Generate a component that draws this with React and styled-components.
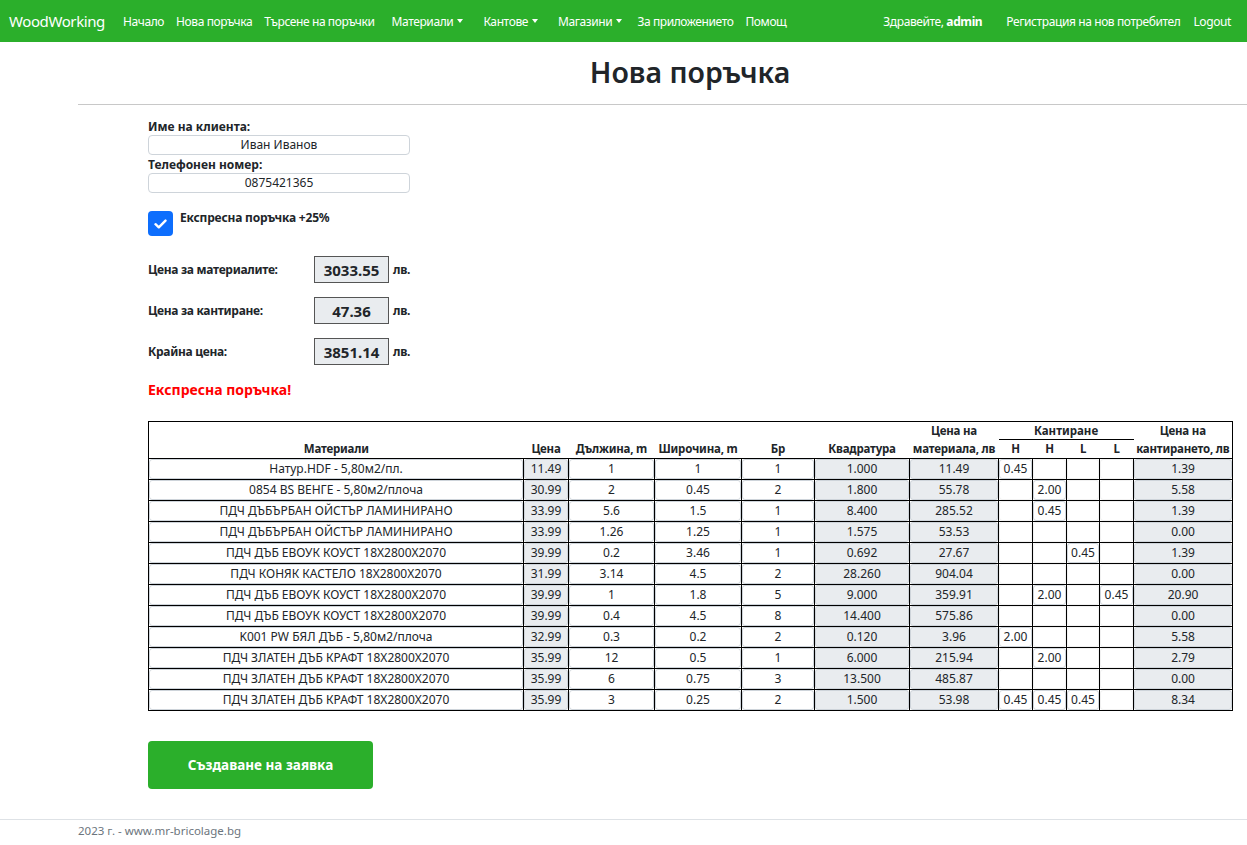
import React from "react";
import styled, {createGlobalStyle} from "styled-components";

const GlobalStyle = createGlobalStyle`
  body {
    margin: 0;
    font-family: "Noto Sans", "Open Sans", sans-serif;
    color: #212529;
    background: #fff;
    overflow-x: hidden;
  }
`;

const GREEN = "#2baf2b";

const NavBar = styled.nav`
  height: 42px;
  background: ${GREEN};
  display: flex;
  align-items: center;
  padding: 0 16px 0 9px;
  color: #fff;
  font-size: 12px;
  letter-spacing: -0.4px;
  white-space: nowrap;
`;

const Brand = styled.div`
  font-size: 15px;
  letter-spacing: -0.4px;
  margin-right: 18px;
`;

const NavLinks = styled.div`
  display: flex;
  align-items: center;
  gap: 12px;
  flex: 1;
`;

const NavLink = styled.span`
  margin-right: ${p => (p.$dropdown ? "3px" : "0")};
  margin-left: ${p => (p.$dropdown ? "5px" : "0")};
  &::after {
    content: ${p => (p.$dropdown ? "''" : "none")};
    display: inline-block;
    margin-left: 4px;
    vertical-align: 3px;
    border-top: 4px solid #fff;
    border-left: 3px solid transparent;
    border-right: 3px solid transparent;
  }
`;

const UserArea = styled.div`
  display: flex;
  align-items: center;
  gap: 13px;
`;

const Greeting = styled.span`
  margin-right: 11px;
`;

const Main = styled.main`
  margin-left: 78px;
  width: 1224px;
`;

const Title = styled.h1`
  margin: 12px 0 0;
  text-align: center;
  font-size: 28.5px;
  font-weight: 600;
  line-height: 36px;
  color: #212529;
`;

const Rule = styled.hr`
  margin: 14px 0 0;
  border: 0;
  border-top: 1px solid #c8c8c8;
`;

const FormArea = styled.section`
  padding: 14px 0 0 70px;
`;

const Label = styled.div`
  font-size: 12px;
  font-weight: 700;
  line-height: 16px;
`;

const TextInput = styled.div`
  width: 262px;
  height: 20px;
  box-sizing: border-box;
  border: 1px solid #ced4da;
  border-radius: 4px;
  font-size: 12px;
  line-height: 18px;
  text-align: center;
  margin-bottom: 2px;
`;

const CheckRow = styled.div`
  display: flex;
  align-items: flex-start;
  gap: 7px;
  margin-top: 18px;
`;

const CheckBox = styled.div`
  width: 25px;
  height: 25px;
  border-radius: 4px;
  background: #0d6efd;
  display: flex;
  align-items: center;
  justify-content: center;
`;

const CheckLabel = styled.span`
  font-size: 12px;
  font-weight: 700;
  line-height: 14px;
  letter-spacing: -0.2px;
`;

const PriceList = styled.div`
  margin-top: 20px;
  display: flex;
  flex-direction: column;
  gap: 14px;
`;

const PriceRow = styled.div`
  display: grid;
  grid-template-columns: 162px 75px auto;
  align-items: center;
  column-gap: 4px;
  font-size: 12px;
  font-weight: 700;
  letter-spacing: -0.3px;
`;

const PriceBox = styled.div`
  height: 27px;
  box-sizing: border-box;
  border: 1px solid #555;
  background: #e9ecef;
  display: flex;
  align-items: center;
  justify-content: center;
  font-size: 15px;
  font-weight: 700;
  letter-spacing: 0;
`;

const Warning = styled.div`
  margin-top: 16px;
  color: #ff0000;
  font-size: 14px;
  font-weight: 700;
  line-height: 18px;
`;

const Table = styled.table`
  margin-top: 22px;
  width: 1085px;
  border-collapse: collapse;
  border: 1px solid #000;
  font-size: 12px;
  table-layout: fixed;
`;

const Th = styled.th`
  font-weight: 700;
  font-size: 11.5px;
  letter-spacing: -0.2px;
  vertical-align: bottom;
  padding: 0;
  line-height: 18px;
  white-space: nowrap;
`;

const GroupTh = styled.th`
  padding: 0;
  line-height: 18px;
  font-weight: 700;
  font-size: 11.5px;
  position: relative;
  &::after {
    content: '';
    position: absolute;
    left: 0;
    right: 0;
    bottom: 0;
    border-bottom: 1px solid #000;
  }
`;

const Td = styled.td`
  border: 1px solid #000;
  padding: 0;
  height: 20px;
`;

const Cell = styled.div`
  height: 20px;
  box-sizing: border-box;
  border: 1px solid ${p => (p.$empty ? "#f1f1f1" : "#ced4da")};
  border-radius: 3px;
  background: ${p => (p.$readonly ? "#e9ecef" : "#fff")};
  text-align: center;
  line-height: 18px;
  font-size: 12px;
  white-space: nowrap;
  overflow: hidden;
`;

const SubmitButton = styled.button`
  margin-top: 30px;
  width: 225px;
  height: 48px;
  border: 0;
  border-radius: 4px;
  background: ${GREEN};
  color: #fff;
  font-family: inherit;
  font-size: 13.5px;
  font-weight: 700;
`;

const Footer = styled.footer`
  margin-top: 30px;
  border-top: 1px solid #dee2e6;
  padding: 3px 0 0 78px;
  font-size: 11.5px;
  line-height: 16px;
  color: #6c757d;
`;

const rows = [
  ["Натур.HDF - 5,80м2/пл.", "11.49", "1", "1", "1", "1.000", "11.49", "0.45", "", "", "", "1.39"],
  ["0854 BS ВЕНГЕ - 5,80м2/плоча", "30.99", "2", "0.45", "2", "1.800", "55.78", "", "2.00", "", "", "5.58"],
  ["ПДЧ ДЪБЪРБАН ОЙСТЪР ЛАМИНИРАНО", "33.99", "5.6", "1.5", "1", "8.400", "285.52", "", "0.45", "", "", "1.39"],
  ["ПДЧ ДЪБЪРБАН ОЙСТЪР ЛАМИНИРАНО", "33.99", "1.26", "1.25", "1", "1.575", "53.53", "", "", "", "", "0.00"],
  ["ПДЧ ДЪБ ЕВОУК КОУСТ 18X2800X2070", "39.99", "0.2", "3.46", "1", "0.692", "27.67", "", "", "0.45", "", "1.39"],
  ["ПДЧ КОНЯК КАСТЕЛО 18X2800X2070", "31.99", "3.14", "4.5", "2", "28.260", "904.04", "", "", "", "", "0.00"],
  ["ПДЧ ДЪБ ЕВОУК КОУСТ 18X2800X2070", "39.99", "1", "1.8", "5", "9.000", "359.91", "", "2.00", "", "0.45", "20.90"],
  ["ПДЧ ДЪБ ЕВОУК КОУСТ 18X2800X2070", "39.99", "0.4", "4.5", "8", "14.400", "575.86", "", "", "", "", "0.00"],
  ["K001 PW БЯЛ ДЪБ - 5,80м2/плоча", "32.99", "0.3", "0.2", "2", "0.120", "3.96", "2.00", "", "", "", "5.58"],
  ["ПДЧ ЗЛАТЕН ДЪБ КРАФТ 18X2800X2070", "35.99", "12", "0.5", "1", "6.000", "215.94", "", "2.00", "", "", "2.79"],
  ["ПДЧ ЗЛАТЕН ДЪБ КРАФТ 18X2800X2070", "35.99", "6", "0.75", "3", "13.500", "485.87", "", "", "", "", "0.00"],
  ["ПДЧ ЗЛАТЕН ДЪБ КРАФТ 18X2800X2070", "35.99", "3", "0.25", "2", "1.500", "53.98", "0.45", "0.45", "0.45", "", "8.34"],
];

// readonly (grey) columns
const readonlyCols = [1, 5, 6, 11];
const kantCols = [7, 8, 9, 10];
const colWidths = [375, 45, 86, 87, 73, 95, 89, 34, 34, 33, 34, 99];

const prices = [
  ["Цена за материалите:", "3033.55"],
  ["Цена за кантиране:", "47.36"],
  ["Крайна цена:", "3851.14"],
];

const App = () => {
  return (
    <>
      <GlobalStyle/>
      <NavBar>
        <Brand>WoodWorking</Brand>
        <NavLinks>
          <NavLink>Начало</NavLink>
          <NavLink>Нова поръчка</NavLink>
          <NavLink>Търсене на поръчки</NavLink>
          <NavLink $dropdown>Материали</NavLink>
          <NavLink $dropdown>Кантове</NavLink>
          <NavLink $dropdown>Магазини</NavLink>
          <NavLink>За приложението</NavLink>
          <NavLink>Помощ</NavLink>
        </NavLinks>
        <UserArea>
          <Greeting>Здравейте, <b>admin</b></Greeting>
          <NavLink>Регистрация на нов потребител</NavLink>
          <NavLink>Logout</NavLink>
        </UserArea>
      </NavBar>

      <Main>
        <Title>Нова поръчка</Title>
        <Rule/>
        <FormArea>
          <Label>Име на клиента:</Label>
          <TextInput>Иван Иванов</TextInput>
          <Label>Телефонен номер:</Label>
          <TextInput>0875421365</TextInput>

          <CheckRow>
            <CheckBox>
              <svg width="13" height="10" viewBox="0 0 13 10">
                <path d="M1.5 5.2 L4.8 8.3 L11.5 1.6" fill="none" stroke="#fff" strokeWidth="2.4"
                      strokeLinecap="round" strokeLinejoin="round"/>
              </svg>
            </CheckBox>
            <CheckLabel>Експресна поръчка +25%</CheckLabel>
          </CheckRow>

          <PriceList>
            {prices.map(([label, value]) => (
              <PriceRow key={label}>
                <span>{label}</span>
                <PriceBox>{value}</PriceBox>
                <span>лв.</span>
              </PriceRow>
            ))}
          </PriceList>

          <Warning>Експресна поръчка!</Warning>

          <Table>
            <colgroup>
              {colWidths.map((w, i) => <col key={i} style={{width: w}}/>)}
            </colgroup>
            <thead>
            <tr>
              <Th rowSpan={2}>Материали</Th>
              <Th rowSpan={2}>Цена</Th>
              <Th rowSpan={2}>Дължина, m</Th>
              <Th rowSpan={2}>Широчина, m</Th>
              <Th rowSpan={2}>Бр</Th>
              <Th rowSpan={2}>Квадратура</Th>
              <Th rowSpan={2}>Цена на<br/>материала, лв</Th>
              <GroupTh colSpan={4}>Кантиране</GroupTh>
              <Th rowSpan={2}>Цена на<br/>кантирането, лв</Th>
            </tr>
            <tr>
              <Th>H</Th>
              <Th>H</Th>
              <Th>L</Th>
              <Th>L</Th>
            </tr>
            </thead>
            <tbody>
            {rows.map((row, r) => (
              <tr key={r}>
                {row.map((v, c) => (
                  <Td key={c}>
                    <Cell $readonly={readonlyCols.includes(c)}
                          $empty={kantCols.includes(c) && v === ""}>{v}</Cell>
                  </Td>
                ))}
              </tr>
            ))}
            </tbody>
          </Table>

          <SubmitButton>Създаване на заявка</SubmitButton>
        </FormArea>
      </Main>
      <Footer>2023 г. - www.mr-bricolage.bg</Footer>
    </>
  );
};

export default App;
